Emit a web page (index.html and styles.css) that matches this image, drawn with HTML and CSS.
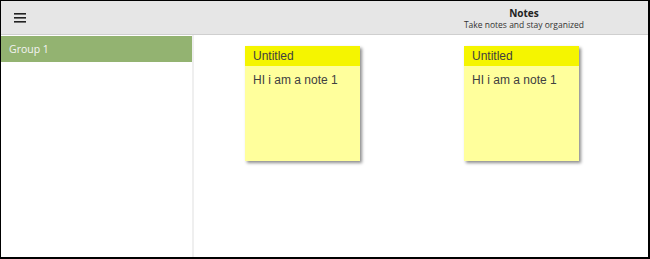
FILE: index.html
```html
<!DOCTYPE html>
<html lang="en">
<head>
    <meta charset="UTF-8">
    <title>Notes</title>
    <link rel="stylesheet" href="styles.css">
</head>
<body>
    <div class="app">
        <header class="topbar">
            <button class="menu-btn" aria-label="Menu">
                <svg width="12" height="10" viewBox="0 0 12 10">
                    <rect x="0" y="0" width="12" height="1.6" fill="#222"/>
                    <rect x="0" y="4" width="12" height="1.6" fill="#222"/>
                    <rect x="0" y="8" width="12" height="1.6" fill="#222"/>
                </svg>
            </button>
            <div class="brand">
                <div class="brand-title">Notes</div>
                <div class="brand-sub">Take notes and stay organized</div>
            </div>
        </header>
        <div class="content">
            <aside class="sidebar">
                <div class="group active">Group 1</div>
            </aside>
            <main class="board">
                <div class="note">
                    <div class="note-title">Untitled</div>
                    <div class="note-body">HI i am a note 1</div>
                </div>
                <div class="note">
                    <div class="note-title">Untitled</div>
                    <div class="note-body">HI i am a note 1</div>
                </div>
            </main>
        </div>
    </div>
</body>
</html>
```

FILE: styles.css
```css
html, body {
    margin: 0;
    padding: 0;
}
body {
    font-family: 'Open Sans', 'DejaVu Sans', sans-serif;
    background: #fff;
}
.app {
    width: 650px;
    height: 259px;
    box-sizing: border-box;
    border-style: solid;
    border-color: #000;
    border-width: 1px 2px 2px 1px;
    display: flex;
    flex-direction: column;
}
.topbar {
    height: 33px;
    background: #e6e6e6;
    border-bottom: 1px solid #cfcfcf;
    display: flex;
    align-items: center;
    justify-content: space-between;
}
.menu-btn {
    border: none;
    background: none;
    padding: 0;
    margin-left: 13px;
    margin-top: 1px;
    width: 12px;
    height: 10px;
    display: flex;
}
.brand {
    text-align: center;
    margin-right: 64px;
    padding-top: 1px;
}
.brand-title {
    font-size: 10px;
    font-weight: bold;
    color: #222;
    line-height: 12px;
}
.brand-sub {
    font-size: 8.5px;
    color: #333;
    line-height: 11px;
}
.content {
    flex: 1;
    display: flex;
}
.sidebar {
    width: 191px;
    border-right: 2px solid #efefef;
    padding-top: 1px;
}
.group {
    height: 26px;
    line-height: 27px;
    padding-left: 8px;
    font-size: 10.5px;
    color: #f4f4f4;
}
.group.active {
    background: #93b371;
}
.board {
    flex: 1;
    display: flex;
    align-items: flex-start;
    gap: 104px;
    padding: 11px 0 0 51px;
}
.note {
    width: 115px;
    height: 115px;
    background: #ffff9c;
    box-shadow: 2px 2px 3px rgba(0, 0, 0, 0.45);
    font-family: 'Liberation Sans', Arial, sans-serif;
    color: #404040;
}
.note-title {
    height: 20px;
    line-height: 20px;
    background: #f5f500;
    padding-left: 8px;
    font-size: 12px;
}
.note-body {
    padding: 7px 8px;
    font-size: 12px;
}
```
